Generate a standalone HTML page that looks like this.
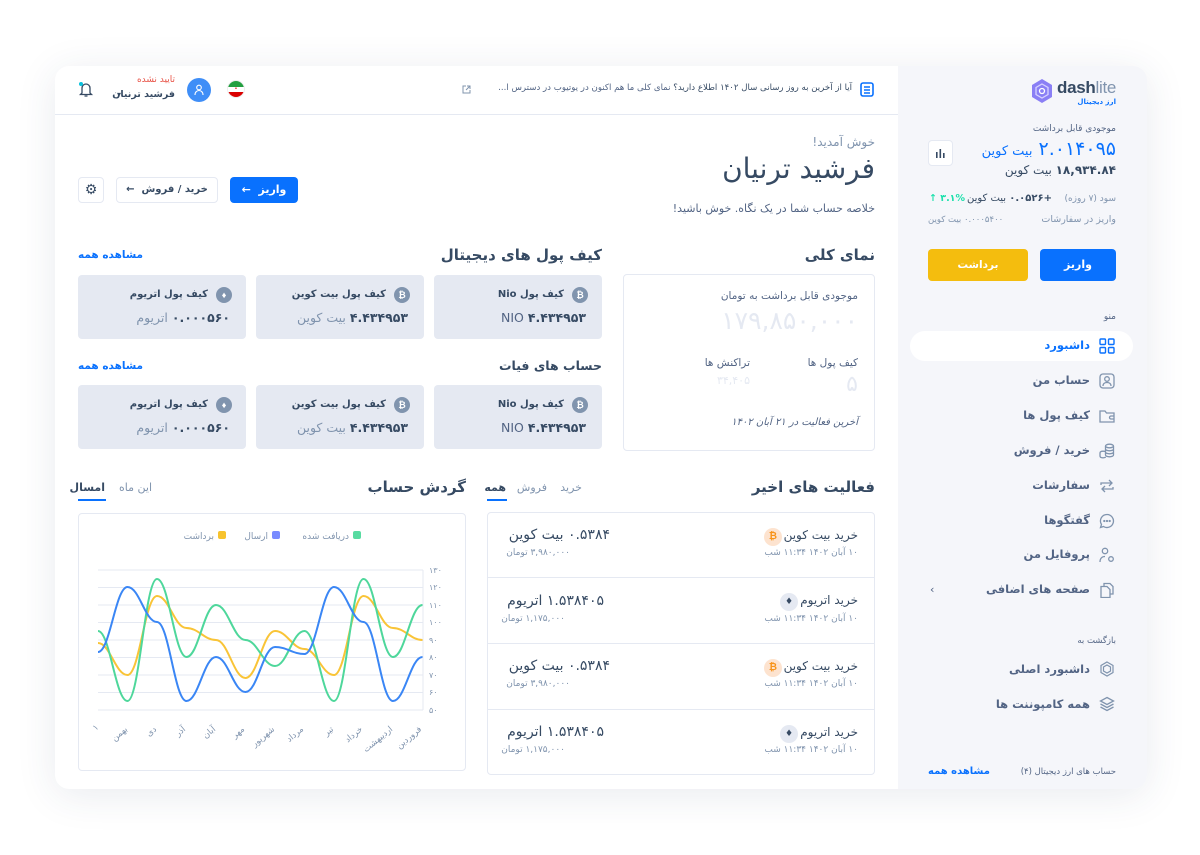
<!DOCTYPE html>
<html><head><meta charset="utf-8"><style>
*{margin:0;padding:0;box-sizing:border-box}
body{width:1200px;height:855px;background:#fff;position:relative;overflow:hidden;font-family:"DejaVu Sans","Liberation Sans",sans-serif;color:#364a63}
.a{position:absolute;white-space:nowrap}
.r{position:absolute;white-space:nowrap;direction:rtl}
.card{position:absolute;left:55px;top:66px;width:1092px;height:723px;border-radius:14px;background:#fff;box-shadow:0 6px 40px rgba(40,60,100,.10);overflow:hidden}
.side{position:absolute;left:898px;top:66px;width:249px;height:723px;background:#f5f6fa;border-radius:0 14px 14px 0}
.wc{position:absolute;width:168px;height:64px;background:#e5e9f2;border-radius:4px}
.coin{position:absolute;width:16px;height:16px;border-radius:50%;background:#8094ae;color:#fff;font-size:9px;line-height:16px;text-align:center;font-family:"Liberation Sans",sans-serif;font-weight:bold}
.mi{position:absolute;right:110px;font-size:11.5px;font-weight:bold;color:#526484;direction:rtl;white-space:nowrap}
.ic{position:absolute;left:1099px;width:16px;height:16px}
</style></head><body>
<div class="card"></div>
<div class="side"></div>
<!-- header -->
<div class="a" style="left:55px;top:114px;width:843px;height:1px;background:#e5e9f2"></div>
<svg class="a" style="left:860px;top:82px" width="14" height="15" viewBox="0 0 14 15"><rect x="1" y="1" width="12" height="13" rx="2" fill="none" stroke="#0971fe" stroke-width="1.6"/><line x1="4" y1="5" x2="10" y2="5" stroke="#0971fe" stroke-width="1.5"/><line x1="4" y1="8" x2="10" y2="8" stroke="#0971fe" stroke-width="1.5"/><line x1="4" y1="11" x2="10" y2="11" stroke="#0971fe" stroke-width="1.5"/></svg>
<div class="r" style="right:348px;top:83px;font-size:8.6px;color:#526484"><span style="color:#364a63">آیا از آخرین به روز رسانی سال ۱۴۰۲ اطلاع دارید؟</span> نمای کلی ما هم اکنون در یوتیوب در دسترس ا...</div>
<svg class="a" style="left:462px;top:85px" width="9" height="9" viewBox="0 0 9 9"><path d="M4 1H1v7h7V5M5 1h3v3M8 1L4 5" fill="none" stroke="#8094ae" stroke-width="1"/></svg>
<div class="a" style="left:227px;top:80px;width:18px;height:18px;border-radius:50%;overflow:hidden;background:#fff;border:1px solid #eee"><div style="height:6px;background:#239f40"></div><div style="height:5px;background:#fff;text-align:center;font-size:5px;color:#da0000;line-height:5px">•</div><div style="height:6px;background:#da0000"></div></div>
<div class="a" style="left:187px;top:78px;width:24px;height:24px;border-radius:50%;background:#3f8ef7"></div>
<svg class="a" style="left:194px;top:84px" width="10" height="12" viewBox="0 0 10 12"><circle cx="5" cy="3.5" r="2.3" fill="none" stroke="#fff" stroke-width="1.1"/><path d="M1 11c0-3 2-4.5 4-4.5s4 1.5 4 4.5" fill="none" stroke="#fff" stroke-width="1.1"/></svg>
<div class="r" style="right:1025px;top:75px;font-size:9px;color:#e85347">تایید نشده</div>
<div class="r" style="right:1025px;top:89px;font-size:9.5px;font-weight:bold;color:#364a63">فرشید ترنیان</div>
<div class="a" style="left:117px;top:90px;font-size:8px;color:#364a63">▾</div>
<svg class="a" style="left:78px;top:80px" width="16" height="18" viewBox="0 0 16 18"><path d="M4 13V8a4 4 0 0 1 8 0v5l1.5 1.5h-11z" fill="none" stroke="#364a63" stroke-width="1.3"/><path d="M6.5 16h3" stroke="#364a63" stroke-width="1.3"/><circle cx="3" cy="4" r="2" fill="#09c2de"/></svg>
<!-- welcome -->
<div class="r" style="right:325px;top:135px;font-size:12px;color:#8094ae">خوش آمدید!</div>
<div class="r" style="right:325px;top:152px;font-size:28px;color:#364a63">فرشید ترنیان</div>
<div class="r" style="right:325px;top:202px;font-size:11px;color:#526484">خلاصه حساب شما در یک نگاه. خوش باشید!</div>
<div class="a" style="left:230px;top:177px;width:68px;height:26px;background:#0971fe;border-radius:4px;color:#fff;font-size:11px;font-weight:bold;line-height:26px;text-align:center;direction:rtl">واریز &nbsp;←</div>
<div class="a" style="left:116px;top:177px;width:102px;height:26px;border:1px solid #e5e9f2;border-radius:4px;color:#364a63;font-size:10px;font-weight:bold;line-height:24px;text-align:center;direction:rtl">خرید / فروش &nbsp;←</div>
<div class="a" style="left:78px;top:177px;width:26px;height:26px;border:1px solid #e5e9f2;border-radius:4px;text-align:center;line-height:24px;font-size:14px;color:#364a63">⚙</div>
<!-- overview -->
<div class="r" style="right:325px;top:246px;font-size:15px;font-weight:bold;color:#364a63">نمای کلی</div>
<div class="a" style="left:623px;top:274px;width:252px;height:177px;border:1px solid #e5e9f2;border-radius:4px"></div>
<div class="r" style="right:342px;top:290px;font-size:10.5px;color:#526484">موجودی قابل برداشت به تومان</div>
<div class="r" style="right:342px;top:306px;font-size:25px;color:#e5e9f2;letter-spacing:1px">۱۷۹,۸۵۰,۰۰۰</div>
<div class="r" style="right:342px;top:357px;font-size:10.5px;color:#526484">کیف پول ها</div>
<div class="r" style="right:342px;top:372px;font-size:22px;color:#e5e9f2">۵</div>
<div class="r" style="right:450px;top:357px;font-size:10.5px;color:#526484">تراکنش ها</div>
<div class="r" style="right:450px;top:374px;font-size:11px;color:#e5e9f2">۳۴,۴۰۵</div>
<div class="r" style="right:342px;top:417px;font-size:10px;color:#526484;font-style:italic">آخرین فعالیت در ۲۱ آبان ۱۴۰۲</div>
<!-- wallets -->
<div class="r" style="right:598px;top:246px;font-size:15px;font-weight:bold;color:#364a63">کیف پول های دیجیتال</div>
<div class="a" style="left:78px;top:249px;font-size:10.5px;color:#0971fe;font-weight:bold">مشاهده همه</div>
<div class="r" style="right:598px;top:358px;font-size:12.5px;font-weight:bold;color:#364a63">حساب های فیات</div>
<div class="a" style="left:78px;top:360px;font-size:10.5px;color:#0971fe;font-weight:bold">مشاهده همه</div>

<div class="wc" style="left:434px;top:275px"></div><div class="wc" style="left:256px;top:275px"></div><div class="wc" style="left:78px;top:275px"></div>
<div class="wc" style="left:434px;top:385px"></div><div class="wc" style="left:256px;top:385px"></div><div class="wc" style="left:78px;top:385px"></div>

<div class="coin" style="left:572px;top:287px">₿</div><div class="r" style="right:636px;top:289px;font-size:10px;font-weight:bold;color:#364a63">کیف پول Nio</div>
<div class="r" style="right:614px;top:310px;font-size:12.5px;color:#526484"><b style="color:#364a63">۴.۴۳۴۹۵۳</b> NIO</div>
<div class="coin" style="left:394px;top:287px">₿</div><div class="r" style="right:814px;top:289px;font-size:10px;font-weight:bold;color:#364a63">کیف پول بیت کوین</div>
<div class="r" style="right:792px;top:310px;font-size:12.5px;color:#8094ae"><b style="color:#364a63">۴.۴۳۴۹۵۳</b> بیت کوین</div>
<div class="coin" style="left:216px;top:287px">♦</div><div class="r" style="right:992px;top:289px;font-size:10px;font-weight:bold;color:#364a63">کیف پول اتریوم</div>
<div class="r" style="right:970px;top:310px;font-size:12.5px;color:#8094ae"><b style="color:#364a63">۰.۰۰۰۵۶۰</b> اتریوم</div>

<div class="coin" style="left:572px;top:397px">₿</div><div class="r" style="right:636px;top:399px;font-size:10px;font-weight:bold;color:#364a63">کیف پول Nio</div>
<div class="r" style="right:614px;top:420px;font-size:12.5px;color:#526484"><b style="color:#364a63">۴.۴۳۴۹۵۳</b> NIO</div>
<div class="coin" style="left:394px;top:397px">₿</div><div class="r" style="right:814px;top:399px;font-size:10px;font-weight:bold;color:#364a63">کیف پول بیت کوین</div>
<div class="r" style="right:792px;top:420px;font-size:12.5px;color:#8094ae"><b style="color:#364a63">۴.۴۳۴۹۵۳</b> بیت کوین</div>
<div class="coin" style="left:216px;top:397px">♦</div><div class="r" style="right:992px;top:399px;font-size:10px;font-weight:bold;color:#364a63">کیف پول اتریوم</div>
<div class="r" style="right:970px;top:420px;font-size:12.5px;color:#8094ae"><b style="color:#364a63">۰.۰۰۰۵۶۰</b> اتریوم</div>

<!-- activities -->
<div class="r" style="right:325px;top:478px;font-size:15px;font-weight:bold;color:#364a63">فعالیت های اخیر</div>
<div class="r" style="right:618px;top:481px;font-size:11px;color:#8094ae">خرید</div>
<div class="r" style="right:653px;top:481px;font-size:11px;color:#8094ae">فروش</div>
<div class="r" style="right:694px;top:481px;font-size:11px;color:#364a63;font-weight:bold">همه</div>
<div class="a" style="left:487px;top:499px;width:20px;height:2px;background:#0971fe"></div>
<div class="a" style="left:487px;top:512px;width:388px;height:263px;border:1px solid #e5e9f2;border-radius:4px"></div>
<div class="a" style="left:487px;top:577px;width:388px;height:1px;background:#e5e9f2"></div>
<div class="a" style="left:487px;top:643px;width:388px;height:1px;background:#e5e9f2"></div>
<div class="a" style="left:487px;top:709px;width:388px;height:1px;background:#e5e9f2"></div>

<div class="a" style="left:764px;top:528px;width:18px;height:18px;border-radius:50%;background:#fde3cf;color:#f7931a;font:bold 10px/18px 'Liberation Sans',sans-serif;text-align:center">₿</div>
<div class="r" style="right:342px;top:528px;font-size:12px;color:#364a63">خرید بیت کوین</div>
<div class="r" style="right:342px;top:548px;font-size:9px;color:#8094ae">۱۰ آبان ۱۴۰۲ ۱۱:۳۴ شب</div>
<div class="r" style="right:590px;top:527px;font-size:14px;color:#364a63">۰.۵۳۸۴ بیت کوین</div>
<div class="r" style="right:630px;top:548px;font-size:9px;color:#8094ae">۳,۹۸۰,۰۰۰ تومان</div>

<div class="a" style="left:780px;top:593px;width:18px;height:18px;border-radius:50%;background:#e5e9f2;color:#364a63;font:9px/18px 'DejaVu Sans',sans-serif;text-align:center">♦</div>
<div class="r" style="right:342px;top:593px;font-size:12px;color:#364a63">خرید اتریوم</div>
<div class="r" style="right:342px;top:614px;font-size:9px;color:#8094ae">۱۰ آبان ۱۴۰۲ ۱۱:۳۴ شب</div>
<div class="r" style="right:596px;top:593px;font-size:14px;color:#364a63">۱.۵۳۸۴۰۵ اتریوم</div>
<div class="r" style="right:635px;top:614px;font-size:9px;color:#8094ae">۱,۱۷۵,۰۰۰ تومان</div>

<div class="a" style="left:764px;top:659px;width:18px;height:18px;border-radius:50%;background:#fde3cf;color:#f7931a;font:bold 10px/18px 'Liberation Sans',sans-serif;text-align:center">₿</div>
<div class="r" style="right:342px;top:659px;font-size:12px;color:#364a63">خرید بیت کوین</div>
<div class="r" style="right:342px;top:679px;font-size:9px;color:#8094ae">۱۰ آبان ۱۴۰۲ ۱۱:۳۴ شب</div>
<div class="r" style="right:590px;top:658px;font-size:14px;color:#364a63">۰.۵۳۸۴ بیت کوین</div>
<div class="r" style="right:630px;top:679px;font-size:9px;color:#8094ae">۳,۹۸۰,۰۰۰ تومان</div>

<div class="a" style="left:780px;top:725px;width:18px;height:18px;border-radius:50%;background:#e5e9f2;color:#364a63;font:9px/18px 'DejaVu Sans',sans-serif;text-align:center">♦</div>
<div class="r" style="right:342px;top:725px;font-size:12px;color:#364a63">خرید اتریوم</div>
<div class="r" style="right:342px;top:745px;font-size:9px;color:#8094ae">۱۰ آبان ۱۴۰۲ ۱۱:۳۴ شب</div>
<div class="r" style="right:596px;top:724px;font-size:14px;color:#364a63">۱.۵۳۸۴۰۵ اتریوم</div>
<div class="r" style="right:635px;top:745px;font-size:9px;color:#8094ae">۱,۱۷۵,۰۰۰ تومان</div>

<!-- chart -->
<div class="r" style="right:734px;top:478px;font-size:15px;font-weight:bold;color:#364a63">گردش حساب</div>
<div class="r" style="right:1048px;top:481px;font-size:11px;color:#8094ae">این ماه</div>
<div class="r" style="right:1095px;top:481px;font-size:11px;color:#364a63;font-weight:bold">امسال</div>
<div class="a" style="left:78px;top:499px;width:28px;height:2px;background:#0971fe"></div>
<div class="a" style="left:78px;top:513px;width:388px;height:258px;border:1px solid #e5e9f2;border-radius:4px"></div>
<svg class="a" style="left:78px;top:513px" width="388" height="258" viewBox="78 513 388 258">
<g stroke="#e5e9f2" stroke-width="1">
<line x1="98" y1="570" x2="423" y2="570"/><line x1="98" y1="587.5" x2="423" y2="587.5"/><line x1="98" y1="605" x2="423" y2="605"/><line x1="98" y1="622.5" x2="423" y2="622.5"/><line x1="98" y1="640" x2="423" y2="640"/><line x1="98" y1="657.5" x2="423" y2="657.5"/><line x1="98" y1="675" x2="423" y2="675"/><line x1="98" y1="692.5" x2="423" y2="692.5"/><line x1="98" y1="710" x2="423" y2="710"/><line x1="423" y1="570" x2="423" y2="710"/></g>
<g font-family="DejaVu Sans" font-size="8" fill="#8094ae">
<text x="429" y="573">۱۳۰</text><text x="429" y="590">۱۲۰</text><text x="429" y="608">۱۱۰</text><text x="429" y="625">۱۰۰</text><text x="429" y="643">۹۰</text><text x="429" y="660">۸۰</text><text x="429" y="678">۷۰</text><text x="429" y="695">۶۰</text><text x="429" y="713">۵۰</text>
</g>
<g font-family="DejaVu Sans" font-size="8.5" fill="#8094ae" text-anchor="end">
<text transform="translate(99,728) rotate(-40)">۱</text>
<text transform="translate(128,730) rotate(-40)">بهمن</text>
<text transform="translate(157,730) rotate(-40)">دی</text>
<text transform="translate(186,730) rotate(-40)">آذر</text>
<text transform="translate(216,730) rotate(-40)">آبان</text>
<text transform="translate(245,730) rotate(-40)">مهر</text>
<text transform="translate(275,730) rotate(-40)">شهریور</text>
<text transform="translate(304,730) rotate(-40)">مرداد</text>
<text transform="translate(334,730) rotate(-40)">تیر</text>
<text transform="translate(363,730) rotate(-40)">خرداد</text>
<text transform="translate(393,730) rotate(-40)">اردیبهشت</text>
<text transform="translate(422,730) rotate(-40)">فروردین</text>
</g>
<rect x="353" y="531" width="8" height="8" rx="2" fill="#58dba1"/><text x="349" y="539" font-family="DejaVu Sans" font-size="9" fill="#8094ae" text-anchor="end">دریافت شده</text>
<rect x="272" y="531" width="8" height="8" rx="2" fill="#798bff"/><text x="268" y="539" font-family="DejaVu Sans" font-size="9" fill="#8094ae" text-anchor="end">ارسال</text>
<rect x="218" y="531" width="8" height="8" rx="2" fill="#f7c32e"/><text x="214" y="539" font-family="DejaVu Sans" font-size="9" fill="#8094ae" text-anchor="end">برداشت</text>
<g fill="none" stroke-width="2">
<path stroke="#f9c437" d="M98 643 C110 643 115.5 675 127.5 675 C139.5 675 145 596 157 596 C169 596 174.5 628 186.5 628 C198.5 628 204 640 216 640 C228 640 233.5 678 245.5 678 C257.5 678 263 631 275 631 C287 631 292.5 649 304.5 649 C316.5 649 322 675 334 675 C346 675 351.5 596 363.5 596 C375.5 596 381 628 393 628 C405 628 410.5 640 422.5 640"/>
<path stroke="#4ed79b" d="M98 631 C110 631 115.5 701 127.5 701 C139.5 701 145 579 157 579 C169 579 174.5 657 186.5 657 C198.5 657 204 605 216 605 C228 605 233.5 640 245.5 640 C257.5 640 263 666 275 666 C287 666 292.5 631 304.5 631 C316.5 631 322 701 334 701 C346 701 351.5 579 363.5 579 C375.5 579 381 657 393 657 C405 657 410.5 605 422.5 605"/>
<path stroke="#3a86f5" d="M98 652 C110 652 115.5 587 127.5 587 C139.5 587 145 622 157 622 C169 622 174.5 701 186.5 701 C198.5 701 204 657 216 657 C228 657 233.5 692 245.5 692 C257.5 692 263 647 275 647 C287 647 292.5 654 304.5 654 C316.5 654 322 587 334 587 C346 587 351.5 622 363.5 622 C375.5 622 381 701 393 701 C405 701 410.5 657 422.5 657"/>
</g>
</svg>

<!-- sidebar -->
<svg class="a" style="left:1030px;top:78px" width="24" height="26" viewBox="0 0 24 26"><path d="M12 1l10 6v12l-10 6-10-6V7z" fill="#8a7ff5"/><path d="M12 6l6 3.5v7L12 20l-6-3.5v-7z" fill="none" stroke="#d8d3ff" stroke-width="1.3"/><circle cx="12" cy="13" r="2.5" fill="none" stroke="#fff" stroke-width="1.3"/></svg>
<div class="a" style="left:1057px;top:78px;font:bold 17px 'Liberation Sans',sans-serif;color:#364a63;letter-spacing:-.3px">dash<span style="font-weight:normal;color:#8094ae">lite</span></div>
<div class="r" style="right:84px;top:98px;font-size:7px;color:#0971fe;font-weight:bold">ارز دیجیتال</div>
<div class="r" style="right:84px;top:124px;font-size:9px;color:#526484">موجودی قابل برداشت</div>
<div class="r" style="right:84px;top:138px;font-size:19px;color:#0971fe">۲.۰۱۴۰۹۵ <span style="font-size:13px">بیت کوین</span></div>
<div class="r" style="right:84px;top:163px;font-size:12px;color:#364a63"><b>۱۸,۹۳۴.۸۴</b> بیت کوین</div>
<div class="a" style="left:928px;top:140px;width:25px;height:26px;background:#fff;border:1px solid #e5e9f2;border-radius:4px"></div>
<svg class="a" style="left:935px;top:147px" width="11" height="11"><rect x="1" y="5" width="1.6" height="6" fill="#364a63"/><rect x="4.5" y="2" width="1.6" height="9" fill="#364a63"/><rect x="8" y="6" width="1.6" height="5" fill="#364a63"/></svg>
<div class="r" style="right:84px;top:194px;font-size:9px;color:#8094ae">سود (۷ روزه)</div>
<div class="r" style="right:148px;top:193px;font-size:10px;color:#364a63"><b>+۰.۰۵۲۶</b> بیت کوین</div>
<div class="a" style="left:929px;top:193px;font-size:9.5px;color:#1ee0ac;font-weight:bold">↑ ۳.۱%</div>
<div class="r" style="right:84px;top:214px;font-size:9.5px;color:#8094ae">واریز در سفارشات</div>
<div class="a" style="left:928px;top:215px;font-size:8.5px;color:#8094ae;direction:rtl">۰.۰۰۰۵۴۰۰ بیت کوین</div>
<div class="a" style="left:1040px;top:249px;width:76px;height:32px;background:#0971fe;border-radius:4px;color:#fff;font-size:11px;font-weight:bold;line-height:32px;text-align:center">واریز</div>
<div class="a" style="left:928px;top:249px;width:100px;height:32px;background:#f4bd0e;border-radius:4px;color:#fff;font-size:10.5px;font-weight:bold;line-height:32px;text-align:center">برداشت</div>
<div class="r" style="right:84px;top:312px;font-size:9px;color:#526484">منو</div>
<div class="a" style="left:910px;top:331px;width:223px;height:30px;background:#fff;border-radius:15px"></div>
<svg class="ic" style="top:338px" viewBox="0 0 16 16" fill="none" stroke="#0971fe" stroke-width="1.4"><rect x="1" y="1" width="5.5" height="5.5" rx="1"/><rect x="9.5" y="1" width="5.5" height="5.5" rx="1"/><rect x="1" y="9.5" width="5.5" height="5.5" rx="1"/><rect x="9.5" y="9.5" width="5.5" height="5.5" rx="1"/></svg>
<div class="mi" style="top:338px;color:#0971fe">داشبورد</div>
<svg class="ic" style="top:373px" viewBox="0 0 16 16" fill="none" stroke="#8094ae" stroke-width="1.3"><rect x="1" y="1" width="14" height="14" rx="3"/><circle cx="8" cy="6" r="2.3"/><path d="M4 13c0-2.5 2-3.5 4-3.5s4 1 4 3.5"/></svg>
<div class="mi" style="top:373px">حساب من</div>
<svg class="ic" style="top:408px" viewBox="0 0 16 16" fill="none" stroke="#8094ae" stroke-width="1.3"><path d="M1 3h5l1.5 2H15v9H1z"/><path d="M15 8h-3a1.5 1.5 0 0 0 0 3h3"/></svg>
<div class="mi" style="top:408px">کیف پول ها</div>
<svg class="ic" style="top:443px" viewBox="0 0 16 16" fill="none" stroke="#8094ae" stroke-width="1.3"><ellipse cx="10.5" cy="3" rx="4" ry="1.8"/><path d="M6.5 3v9c0 1 1.8 1.8 4 1.8s4-.8 4-1.8V3M6.5 6c0 1 1.8 1.8 4 1.8s4-.8 4-1.8M6.5 9c0 1 1.8 1.8 4 1.8s4-.8 4-1.8"/><path d="M6.5 8.5c-.6-.2-1.5-.3-2.5-.3-2 0-3 .8-3 1.8v3c0 1 1 1.8 3 1.8s2.5-.5 2.5-1"/></svg>
<div class="mi" style="top:443px">خرید / فروش</div>
<svg class="ic" style="top:478px" viewBox="0 0 16 16" fill="none" stroke="#8094ae" stroke-width="1.3"><path d="M2 7V5h11M10 2l3 3-3 3M14 9v2H3M6 14l-3-3 3-3"/></svg>
<div class="mi" style="top:478px">سفارشات</div>
<svg class="ic" style="top:513px" viewBox="0 0 16 16" fill="none" stroke="#8094ae" stroke-width="1.3"><path d="M8 1.5a6.5 6.5 0 1 1-3.5 12L1.5 14.5l1-3A6.5 6.5 0 0 1 8 1.5z"/><circle cx="5.3" cy="8" r=".5" fill="#8094ae"/><circle cx="8" cy="8" r=".5" fill="#8094ae"/><circle cx="10.7" cy="8" r=".5" fill="#8094ae"/></svg>
<div class="mi" style="top:513px">گفتگوها</div>
<svg class="ic" style="top:547px" viewBox="0 0 16 16" fill="none" stroke="#8094ae" stroke-width="1.3"><circle cx="6" cy="4" r="2.7"/><path d="M1 15c0-3.5 2-5.5 5-5.5"/><circle cx="12" cy="12" r="2.3"/></svg>
<div class="mi" style="top:547px">پروفایل من</div>
<svg class="ic" style="top:582px" viewBox="0 0 16 16" fill="none" stroke="#8094ae" stroke-width="1.3"><path d="M5 4V1.5h6l3 3V12h-3"/><path d="M2 4.5h6l3 3v8H2z"/></svg>
<div class="mi" style="top:582px">صفحه های اضافی</div>
<div class="a" style="left:930px;top:583px;font-size:11px;color:#526484">‹</div>
<div class="r" style="right:84px;top:636px;font-size:8.5px;color:#526484">بازگشت به</div>
<svg class="ic" style="top:661px" viewBox="0 0 16 16" fill="none" stroke="#8094ae" stroke-width="1.2"><path d="M8 1l6 3.5v7L8 15l-6-3.5v-7z"/><path d="M8 4l3.5 2v4L8 12l-3.5-2V6z"/></svg>
<div class="mi" style="top:662px">داشبورد اصلی</div>
<svg class="ic" style="top:696px" viewBox="0 0 16 16" fill="none" stroke="#8094ae" stroke-width="1.3"><path d="M8 1.5l6.5 3.5L8 8.5 1.5 5z"/><path d="M1.5 8L8 11.5 14.5 8M1.5 11L8 14.5 14.5 11"/></svg>
<div class="mi" style="top:697px">همه کامپوننت ها</div>
<div class="r" style="right:84px;top:767px;font-size:8.5px;color:#526484">حساب های ارز دیجیتال (۴)</div>
<div class="a" style="left:928px;top:766px;font-size:10px;color:#0971fe;font-weight:bold">مشاهده همه</div>
</body></html>
